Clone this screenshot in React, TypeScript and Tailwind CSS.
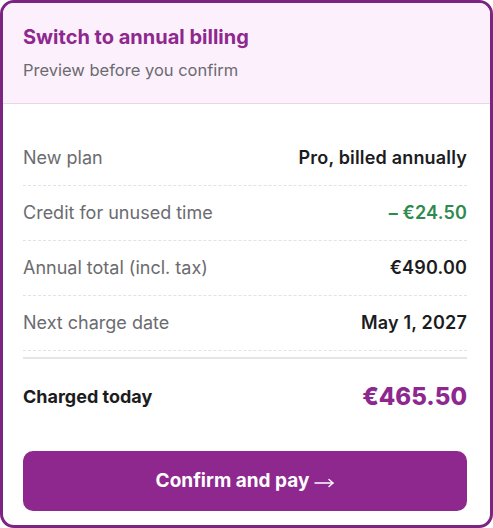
import React from "react";

const rows: { label: string; value: string; cls: string }[] = [
  { label: "New plan", value: "Pro, billed annually", cls: "text-[#1c1c1e]" },
  { label: "Credit for unused time", value: "– €24.50", cls: "text-[#2e8a4e]" },
  { label: "Annual total (incl. tax)", value: "€490.00", cls: "text-[#1c1c1e]" },
  { label: "Next charge date", value: "May 1, 2027", cls: "text-[#1c1c1e]" },
];

export default function App() {
  return (
    <div className="w-[493px] h-[528px] bg-white" style={{ fontFamily: "Inter, 'Noto Sans', sans-serif" }}>
      <div className="h-full border-[3px] border-[#7b2482] rounded-[14px] overflow-hidden flex flex-col">
        <div className="bg-[#fcf0fc] border-b border-[#ecd4ec] pl-[20px] pr-[23px] pt-[22px] pb-[22px]">
          <div className="text-[20px] leading-[24px] font-bold text-[#8e288e]">Switch to annual billing</div>
          <div className="mt-[10px] text-[16.5px] leading-[22px] text-[#6b6b70]">Preview before you confirm</div>
        </div>
        <div className="pl-[20px] pr-[23px] pt-[27px] flex flex-col">
          {rows.map((r) => (
            <div key={r.label} className="flex items-center justify-between py-[16px] border-b border-dashed border-[#e3e3e3]">
              <span className="text-[18px] leading-[22px] text-[#6b6b70]">{r.label}</span>
              <span className={`text-[18px] leading-[22px] font-semibold tracking-[0.01em] ${r.cls}`}>{r.value}</span>
            </div>
          ))}
          <div className="mt-[6px] border-t-2 border-[#e5e5e5]" />
          <div className="flex items-center justify-between pt-[22px]">
            <span className="text-[18px] leading-[22px] font-bold text-[#1c1c1e]">Charged today</span>
            <span className="text-[24px] leading-[32px] font-extrabold text-[#8e288e]">€465.50</span>
          </div>
          <button className="mt-[38px] h-[60px] w-full rounded-[10px] bg-[#8e288e] text-white text-[19px] font-bold flex items-center justify-center gap-[5px]">
            <span>Confirm and pay</span>
            <svg width="20" height="12" viewBox="0 0 20 12" fill="none" stroke="white" strokeWidth="1.4" strokeLinecap="round" strokeLinejoin="round" className="mt-[3px]">
              <path d="M1 6H19" />
              <path d="M15 2.5L19 6L15 9.5" />
            </svg>
          </button>
        </div>
      </div>
    </div>
  );
}
